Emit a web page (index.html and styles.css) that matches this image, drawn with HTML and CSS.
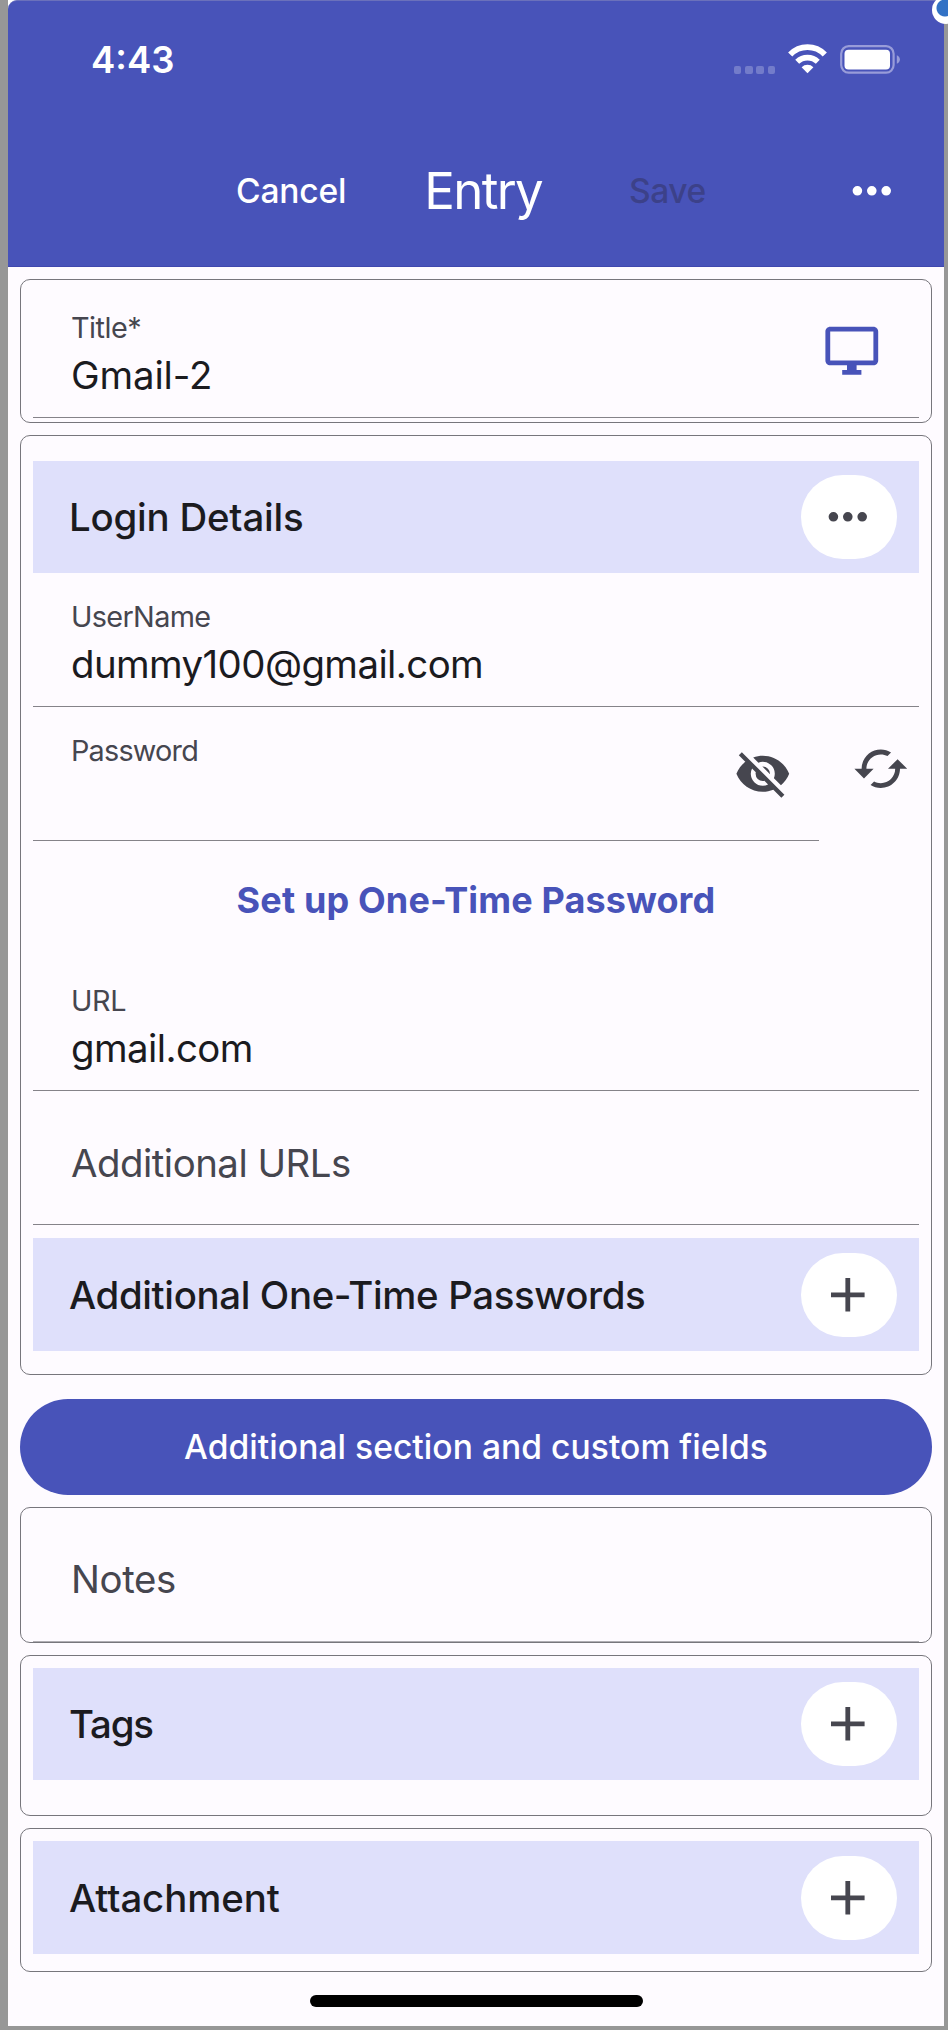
FILE: index.html
```
<!DOCTYPE html>
<html lang="en">
<head>
<meta charset="utf-8">
<title>Entry</title>
<link rel="stylesheet" href="styles.css">
</head>
<body>
<div class="desktop">
  <div class="phone">
    <header class="app-header">
      <div class="status-bar">
        <span class="clock">4:43</span>
        <div class="status-icons">
          <span class="signal"><i></i><i></i><i></i><i></i></span>
          <svg class="wifi" viewBox="0 0 39 30" width="39" height="30">
            <path d="M2.200 10.400A24 24 0 0 1 36.800 10.400" fill="none" stroke="#fff" stroke-width="5.800"/>
            <path d="M9.200 17.800A14.800 14.800 0 0 1 29.800 17.800" fill="none" stroke="#fff" stroke-width="5.600"/>
            <path d="M13.600 23.200A8.600 8.600 0 0 1 25.400 23.200L19.500 29.200Z" fill="#fff"/>
          </svg>
          <svg class="battery" viewBox="0 0 60 29" width="60" height="29">
            <rect x="1.2" y="1.2" width="52.4" height="26.4" rx="7.5" fill="none" stroke="#989cd9" stroke-width="2.2"/>
            <rect x="4.5" y="4.8" width="45.5" height="19.8" rx="4" fill="#fff"/>
            <path d="M56.8 10.2C58.8 11 59.9 12.6 59.9 14.5S58.8 18 56.8 18.8Z" fill="#989cd9"/>
          </svg>
        </div>
      </div>
      <nav class="nav-bar">
        <button class="nav-action cancel">Cancel</button>
        <h1 class="nav-title">Entry</h1>
        <button class="nav-action save">Save</button>
        <button class="nav-more" aria-label="More"><svg class="icon" viewBox="0 0 24 24"><path d="M16 12a2 2 0 1 1 4 0 2 2 0 0 1-4 0m-6 0a2 2 0 1 1 4 0 2 2 0 0 1-4 0m-6 0a2 2 0 1 1 4 0 2 2 0 0 1-4 0z"/></svg></button>
      </nav>
    </header>

    <main class="form">
      <section class="card card-title">
        <div class="field">
          <div class="field-text">
            <span class="label label-title">Title*</span>
            <span class="value value-title">Gmail-2</span>
          </div>
          <svg class="icon icon-monitor" viewBox="0 0 24 24"><path d="M21 2H3C1.900 2 1 2.900 1 4V16C1 17.100 1.900 18 3 18H10V20H8V22H16V20H14V18H21C22.100 18 23 17.100 23 16V4C23 2.900 22.100 2 21 2ZM21 16H3V4H21V16Z" fill-rule="evenodd"/></svg>
        </div>
      </section>

      <section class="card card-login">
        <div class="section-head">
          <h2 class="tight">Login Details</h2>
          <button class="pill" aria-label="More"><svg class="icon" viewBox="0 0 24 24"><path d="M16 12a2 2 0 1 1 4 0 2 2 0 0 1-4 0m-6 0a2 2 0 1 1 4 0 2 2 0 0 1-4 0m-6 0a2 2 0 1 1 4 0 2 2 0 0 1-4 0z"/></svg></button>
        </div>
        <div class="field">
          <div class="field-text">
            <span class="label">UserName</span>
            <span class="value">dummy100@gmail.com</span>
          </div>
        </div>
        <div class="password-row">
          <div class="field">
            <div class="field-text"><span class="label label-password">Password</span></div>
            <svg class="icon icon-eye" viewBox="0 0 24 24"><path d="M11.83,9L15,12.16C15,12.11 15,12.05 15,12A3,3 0 0,0 12,9C11.94,9 11.89,9 11.83,9M7.53,9.8L9.08,11.35C9.03,11.56 9,11.77 9,12A3,3 0 0,0 12,15C12.22,15 12.44,14.97 12.65,14.92L14.2,16.47C13.53,16.8 12.79,17 12,17A5,5 0 0,1 7,12C7,11.21 7.2,10.47 7.53,9.8M2,4.27L4.28,6.55L4.73,7C3.08,8.3 1.78,10 1,12C2.73,16.39 7,19.5 12,19.5C13.55,19.5 15.03,19.2 16.38,18.66L16.81,19.08L19.73,22L21,20.73L3.27,3M12,7A5,5 0 0,1 17,12C17,12.64 16.87,13.26 16.64,13.82L19.57,16.75C21.07,15.5 22.27,13.86 23,12C21.27,7.61 17,4.5 12,4.5C10.6,4.5 9.26,4.75 8,5.2L10.17,7.35C10.74,7.13 11.35,7 12,7Z"/></svg>
          </div>
          <svg class="icon icon-refresh" viewBox="0 0 24 24"><path d="M19 8l-4 4h3c0 3.310-2.690 6-6 6-1.010 0-1.970-.25-2.800-.7l-1.460 1.460C8.970 19.540 10.430 20 12 20c4.420 0 8-3.580 8-8h3l-4-4zM6 12c0-3.310 2.690-6 6-6 1.010 0 1.970.25 2.800.7l1.460-1.460C15.030 4.460 13.570 4 12 4c-4.420 0-8 3.580-8 8H1l4 4 4-4H6z"/></svg>
        </div>
        <button class="otp-link">Set up One-Time Password</button>
        <div class="field">
          <div class="field-text">
            <span class="label label-url">URL</span>
            <span class="value">gmail.com</span>
          </div>
        </div>
        <div class="field">
          <span class="placeholder">Additional URLs</span>
        </div>
        <div class="section-head section-otp">
          <h2>Additional One-Time Passwords</h2>
          <button class="pill" aria-label="Add"><svg class="icon" viewBox="0 0 24 24"><path d="M19 13h-6v6h-2v-6H5v-2h6V5h2v6h6z"/></svg></button>
        </div>
      </section>

      <button class="primary">Additional section and custom fields</button>

      <section class="card card-notes">
        <div class="field"><span class="placeholder">Notes</span></div>
      </section>

      <section class="card card-tags">
        <div class="section-head">
          <h2 class="tags">Tags</h2>
          <button class="pill" aria-label="Add"><svg class="icon" viewBox="0 0 24 24"><path d="M19 13h-6v6h-2v-6H5v-2h6V5h2v6h6z"/></svg></button>
        </div>
      </section>

      <section class="card card-attachment">
        <div class="section-head">
          <h2 class="attachment">Attachment</h2>
          <button class="pill" aria-label="Add"><svg class="icon" viewBox="0 0 24 24"><path d="M19 13h-6v6h-2v-6H5v-2h6V5h2v6h6z"/></svg></button>
        </div>
      </section>
    </main>
    <div class="home-indicator"></div>
  </div>
  <span class="corner-badge"></span>
</div>
</body>
</html>
```
FILE: styles.css
```
* { box-sizing: border-box; }

body {
  margin: 0;
  background: #979797;
  font-family: Inter, "Liberation Sans", sans-serif;
  color: #1b1b1f;
}

button {
  border: 0;
  padding: 0;
  background: none;
  font-family: inherit;
  color: inherit;
}

h1, h2 { margin: 0; }

.desktop {
  position: relative;
  height: 2030px;
  padding: 0 4px 4px 8px;
  overflow: hidden;
}

.phone {
  display: flex;
  flex-direction: column;
  height: 2026px;
  background: linear-gradient(#fff 20px, #fefbff 20px);
}

.icon {
  display: block;
  flex: none;
  width: 57.6px;
  height: 57.6px;
  fill: #46464f;
}

/* Header */
.app-header {
  height: 267px;
  border-top: 1px solid #6b71bb;
  border-bottom: 1px solid #4048ae;
  border-radius: 9px 0 0 0;
  background: #4853b9;
  color: #fff;
}

.status-bar {
  display: flex;
  justify-content: space-between;
  align-items: flex-start;
  height: 114px;
  padding: 35px 44px 0 83px;
}

.clock {
  font-size: 36.5px;
  font-weight: 600;
  line-height: 48px;
}

.status-icons {
  display: flex;
  align-items: flex-start;
  padding-top: 8px;
}

.signal {
  display: flex;
  gap: 3.7px;
  margin: 22px 13px 0 0;
}

.signal i {
  width: 7.5px;
  height: 7.5px;
  border-radius: 2px;
  background: #737cca;
}

.wifi { margin-right: 13px; }
.battery { margin-top: 1px; }

.nav-bar {
  display: flex;
  align-items: center;
  height: 151px;
  padding: 0 43px 0 228px;
}

.nav-action {
  font-size: 33.6px;
  font-weight: 500;
  line-height: 46px;
  letter-spacing: -0.2px;
}

.save {
  margin-left: 87px;
  color: #3c4189;
  letter-spacing: -0.45px;
}

.nav-title {
  margin-left: 78px;
  font-size: 51px;
  font-weight: 400;
  line-height: 60px;
  letter-spacing: -1.7px;
}

.nav-more { margin-left: auto; }
.nav-more .icon { fill: #fff; }

/* Form */
.form {
  display: flex;
  flex-direction: column;
  gap: 12px;
  padding: 12px 12px 0;
}

.card {
  padding: 0 12px;
  border: 1px solid #77767c;
  border-radius: 10px;
}

.card-title { height: 144px; padding-top: 4px; }
.card-login { height: 940px; padding-top: 25px; }
.card-notes { height: 136px; }
.card-tags { height: 161px; padding-top: 12px; }
.card-attachment { height: 144px; padding-top: 12px; }

.field {
  display: flex;
  justify-content: space-between;
  height: 134px;
  padding: 0 38px;
  border-bottom: 1px solid #858389;
}

.card-notes .field { border-bottom-color: #b0aeb3; }

.field-text {
  display: flex;
  flex-direction: column;
  gap: 7px;
  padding-top: 27px;
}

.label {
  font-size: 28.8px;
  line-height: 34px;
  letter-spacing: -0.65px;
  color: #46464f;
}

.label-title { letter-spacing: -0.5px; }
.label-password { letter-spacing: -0.78px; }
.label-url { letter-spacing: -0.33px; }

.value {
  font-size: 38.4px;
  line-height: 46px;
  letter-spacing: -0.58px;
}

.value-title { letter-spacing: -0.13px; }

.placeholder {
  padding-top: 49px;
  font-size: 38.4px;
  line-height: 46px;
  letter-spacing: -0.5px;
  color: #46464f;
}

.card-notes .placeholder {
  padding-top: 48px;
  letter-spacing: -0.38px;
}

.icon-monitor {
  margin-top: 38px;
  fill: #4853b9;
}

.password-row {
  display: flex;
  justify-content: space-between;
}

.password-row .field {
  width: 786px;
  padding-right: 27px;
}

.icon-eye { margin-top: 38px; }
.icon-refresh { margin: 33px 9px 0 0; }

.otp-link {
  display: block;
  width: 100%;
  height: 116px;
  padding-top: 2px;
  font-size: 36px;
  font-weight: 700;
  letter-spacing: 0.14px;
  color: #4853b9;
}

.section-head {
  display: flex;
  align-items: center;
  justify-content: space-between;
  height: 112px;
  padding: 0 22px 0 36px;
  background: #dfe0fb;
}

.section-otp {
  height: 113px;
  margin-top: 13px;
}

.card-attachment .section-head { height: 113px; }

.section-head h2 {
  font-size: 38.4px;
  font-weight: 500;
  line-height: 46px;
  letter-spacing: -0.36px;
}

.section-head .tight { letter-spacing: -0.2px; }
.section-head .tags { letter-spacing: -1.2px; }
.section-head .attachment { letter-spacing: -0.08px; }

.pill {
  display: flex;
  align-items: center;
  justify-content: center;
  width: 96px;
  height: 84px;
  padding-right: 2px;
  border-radius: 42px;
  background: #fff;
}

.primary {
  height: 96px;
  margin-top: 12px;
  padding-bottom: 2px;
  border-radius: 48px;
  background: #4853b9;
  color: #fff;
  font-size: 33.6px;
  font-weight: 500;
  letter-spacing: 0.05px;
}

.home-indicator {
  width: 333px;
  height: 12px;
  margin: 23px auto 0;
  border-radius: 6px;
  background: #000;
}

/* Badge overlapping the window corner */
.corner-badge {
  position: absolute;
  top: -4px;
  left: 932px;
  width: 28px;
  height: 28px;
  border-radius: 50%;
  background: radial-gradient(circle at 13px 12px, #3272c5 8px, #fff 9px);
}
```
